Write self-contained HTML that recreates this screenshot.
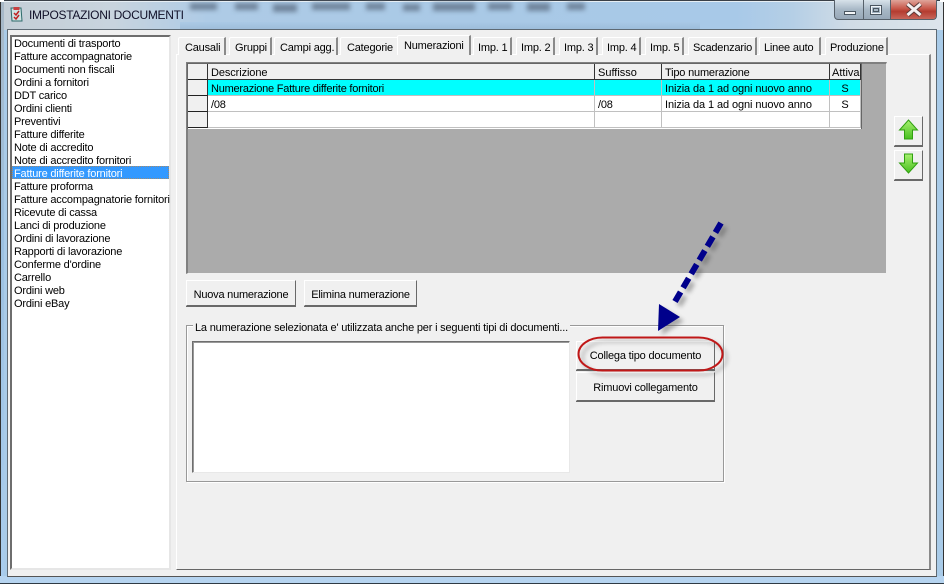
<!DOCTYPE html>
<html><head><meta charset="utf-8"><style>
html,body{margin:0;padding:0;background:#fff}
#w{position:relative;width:944px;height:584px;overflow:hidden;background:#a9cbe8;font:11px "Liberation Sans",sans-serif;color:#000;letter-spacing:-.19px}
#w div,#w span.t{position:absolute;box-sizing:border-box;white-space:nowrap}
.t{line-height:13px;height:13px}
.btn{background:#f0f0f0;border:1px solid;border-color:#fff #696969 #696969 #fff;box-shadow:0 1px 0 #696969;text-align:center;line-height:28px}
.tab{height:18px;top:37px;line-height:20px;border-right:2px solid #8a8a8a;border-top:1px solid #fff;border-left:1px solid #fff;background:#f0f0f0;border-top-left-radius:2px}
.l{left:14px;height:13px;line-height:13px;top:0}
.row{left:188px;width:673px;height:16px}
.c{top:0;height:16px;line-height:18px;padding-left:3px;border-right:1px solid #c0c0c0;border-bottom:1px solid #c0c0c0}
.h{background:#f0f0f0;border-right:1px solid #333;border-bottom:1px solid #333}
.ind{left:0;width:20px;background:#f0f0f0;border-right:1px solid #333;border-bottom:1px solid #222;height:16px;top:0}
</style></head><body><div id="w">
<div style="left:0;top:0;width:944px;height:30px;background:linear-gradient(90deg,#c4ced6 0,#c8d4de 12%,#aecbe6 22%,#a9c9e6 50%,#a8c9e8 78%,#b5cfe6 84%,#d0dce6 90%,#dde5ec 100%)"></div>
<div style="left:180px;top:22px;width:520px;height:7px;background:linear-gradient(#a9c9e6,#98b8d6);opacity:.7"></div>
<div style="left:0;top:0;width:944px;height:1px;background:#3a4048"></div>
<div style="left:0;top:1px;width:944px;height:1px;background:#e6eef4"></div>
<svg style="position:absolute;left:180px;top:0;filter:blur(2.5px)" width="440" height="26"><g fill="#70859c"><rect x="10" y="3" width="27" height="7"/><rect x="55" y="3" width="23" height="7"/><rect x="93" y="4" width="24" height="8"/><rect x="132" y="3" width="38" height="7"/><rect x="186" y="3" width="19" height="7"/><rect x="223" y="4" width="17" height="7"/><rect x="253" y="3" width="42" height="8"/><rect x="308" y="3" width="24" height="7"/><rect x="347" y="3" width="23" height="8"/><rect x="387" y="3" width="18" height="7"/></g></svg>
<div style="left:0;top:0;width:4px;height:584px;background:linear-gradient(#a8b8c6,#9cc0e0 40%,#a9cdee)"></div>
<div style="left:0;top:1px;width:1px;height:583px;background:#333"></div>
<div style="left:943px;top:1px;width:1px;height:583px;background:#333"></div>
<div style="left:0;top:583px;width:944px;height:1px;background:#2f3a44"></div>
<div style="left:0;top:576px;width:944px;height:7px;background:#b6d4f0"></div>
<div style="left:0;top:0;width:4px;height:2px;background:#fff"></div>
<div style="left:940px;top:0;width:4px;height:2px;background:#fff"></div>

<svg style="position:absolute;left:9px;top:6px" width="16" height="18" viewBox="0 0 16 18"><path d="M2 2h10l1 13H3z" fill="#cfe4e4" stroke="#2d6a6a"/><rect x="4.500" y="1" width="6" height="3" fill="#c84040"/><path d="M5 7l2 2 3-4M5 11l2 2 3-4" fill="none" stroke="#c02020" stroke-width="1.500"/></svg>
<span class="t" style="left:29px;top:8px;font-size:12px;letter-spacing:-.29px;line-height:15px;height:15px;color:#101028">IMPOSTAZIONI DOCUMENTI</span>

<div style="left:834px;top:0;width:103px;height:20px;border:1px solid #56606a;border-top:0;border-radius:0 0 4px 4px;overflow:hidden;background:linear-gradient(#d8e2ea,#a8b8c6 50%,#98a8b8)">
<div style="left:28px;top:0;width:1px;height:19px;background:#56606a"></div>
<div style="left:55px;top:0;width:1px;height:19px;background:#56606a"></div>
<div style="left:56px;top:0;width:46px;height:19px;background:linear-gradient(#dfa59a,#c8584a 45%,#b43c30 60%,#c8665a)"></div>
<div style="left:9px;top:11px;width:12px;height:4px;background:#f4f6f8;border:1px solid #4a5560"></div>
<div style="left:35px;top:5px;width:12px;height:10px;background:transparent;border:1px solid #4a5560;box-shadow:inset 0 0 0 1px #f0f4f8"></div>
<div style="left:38px;top:8px;width:6px;height:4px;border:1px solid #4a5560"></div>
<svg style="position:absolute;left:70px;top:2px" width="18" height="15"><path d="M2.500 2l13 11M15.500 2l-13 11" stroke="#5a3a38" stroke-width="5"/><path d="M2.500 2l13 11M15.500 2l-13 11" stroke="#f4f0f0" stroke-width="3"/></svg>
</div>

<!-- client -->
<div style="left:7px;top:29px;width:930px;height:548px;background:#f0f0f0;border:1px solid #5e6a74;border-bottom-color:#555"></div>

<!-- list -->
<div style="left:10px;top:35px;width:161px;height:535px;background:#fff;border:2px solid;border-color:#6e6e6e #e6e6e6 #e6e6e6 #6e6e6e;overflow:hidden"></div>
<div style="left:12px;top:166px;width:157px;height:13px;background:#3399ff;outline:1px dotted #a08a70;outline-offset:-1px"></div>
<div class="l" style="top:38px">Documenti di trasporto</div>
<div class="l" style="top:51px">Fatture accompagnatorie</div>
<div class="l" style="top:64px">Documenti non fiscali</div>
<div class="l" style="top:77px">Ordini a fornitori</div>
<div class="l" style="top:90px">DDT carico</div>
<div class="l" style="top:103px">Ordini clienti</div>
<div class="l" style="top:116px">Preventivi</div>
<div class="l" style="top:129px">Fatture differite</div>
<div class="l" style="top:142px">Note di accredito</div>
<div class="l" style="top:155px">Note di accredito fornitori</div>
<div class="l" style="top:168px;color:#fff">Fatture differite fornitori</div>
<div class="l" style="top:181px">Fatture proforma</div>
<div class="l" style="top:194px;width:156px;overflow:hidden">Fatture accompagnatorie fornitori</div>
<div class="l" style="top:207px">Ricevute di cassa</div>
<div class="l" style="top:220px">Lanci di produzione</div>
<div class="l" style="top:233px">Ordini di lavorazione</div>
<div class="l" style="top:246px">Rapporti di lavorazione</div>
<div class="l" style="top:259px">Conferme d'ordine</div>
<div class="l" style="top:272px">Carrello</div>
<div class="l" style="top:285px">Ordini web</div>
<div class="l" style="top:298px">Ordini eBay</div>

<!-- page -->
<div style="left:176px;top:54px;width:755px;height:516px;background:#f0f0f0;border:1px solid;border-color:#fff #8a8a8a #666 #fff;border-right-width:2px;border-bottom-width:1px"></div>
<div class="tab" style="left:178px;width:48px;padding-left:6px">Causali</div>
<div class="tab" style="left:229px;width:43px;padding-left:5px">Gruppi</div>
<div class="tab" style="left:274px;width:64px;padding-left:5px">Campi agg.</div>
<div class="tab" style="left:340px;width:57px;padding-left:6px;border-right:0">Categorie</div>
<div class="tab" style="left:397px;top:35px;width:74px;height:20px;line-height:21px;border-bottom:0;padding-left:6px">Numerazioni</div>
<div class="tab" style="left:473px;width:39px;padding-left:4px">Imp. 1</div>
<div class="tab" style="left:516px;width:39px;padding-left:4px">Imp. 2</div>
<div class="tab" style="left:559px;width:39px;padding-left:4px">Imp. 3</div>
<div class="tab" style="left:602px;width:39px;padding-left:4px">Imp. 4</div>
<div class="tab" style="left:645px;width:39px;padding-left:4px">Imp. 5</div>
<div class="tab" style="left:688px;width:69px;padding-left:4px">Scadenzario</div>
<div class="tab" style="left:759px;width:62px;padding-left:4px">Linee auto</div>
<div class="tab" style="left:825px;width:63px;padding-left:4px">Produzione</div>

<!-- grid -->
<div style="left:186px;top:62px;width:701px;height:212px;background:#ababab;border:1px solid;border-color:#808080 #f0f0f0 #f0f0f0 #808080;border-width:2px 1px 1px 2px"></div>
<div style="left:187px;top:63px;width:675px;height:66px;border:1px solid #666;border-bottom:0;background:#fff"></div>
<div class="row" style="top:64px">
<div class="ind"></div>
<div class="c h" style="left:20px;width:387px;letter-spacing:-.1px">Descrizione</div>
<div class="c h" style="left:407px;width:67px;letter-spacing:0">Suffisso</div>
<div class="c h" style="left:474px;width:168px">Tipo numerazione</div>
<div class="c h" style="left:642px;width:31px;padding-left:2px;letter-spacing:0">Attiva</div>
</div>
<div class="row" style="top:80px;background:#00ffff">
<div class="ind"></div>
<div class="c" style="left:20px;width:387px;letter-spacing:-.23px">Numerazione Fatture differite fornitori</div>
<div class="c" style="left:407px;width:67px"></div>
<div class="c" style="left:474px;width:168px;letter-spacing:-.1px">Inizia da 1 ad ogni nuovo anno</div>
<div class="c" style="left:642px;width:31px;text-align:center;padding:0">S</div>
</div>
<div class="row" style="top:96px;background:#fff">
<div class="ind"></div>
<div class="c" style="left:20px;width:387px">/08</div>
<div class="c" style="left:407px;width:67px">/08</div>
<div class="c" style="left:474px;width:168px;letter-spacing:-.1px">Inizia da 1 ad ogni nuovo anno</div>
<div class="c" style="left:642px;width:31px;text-align:center;padding:0">S</div>
</div>
<div class="row" style="top:112px;background:#fff">
<div class="ind"></div>
<div class="c" style="left:20px;width:387px"></div>
<div class="c" style="left:407px;width:67px"></div>
<div class="c" style="left:474px;width:168px"></div>
<div class="c" style="left:642px;width:31px"></div>
</div>

<!-- side buttons -->
<div class="btn" style="left:894px;top:116px;width:29px;height:30px"></div>
<div class="btn" style="left:894px;top:150px;width:29px;height:30px"></div>
<svg style="position:absolute;left:897px;top:119px" width="24" height="58"><defs><linearGradient id="g" x1="0" y1="0" x2="0" y2="1"><stop offset="0" stop-color="#a8f070"/><stop offset="1" stop-color="#48c020"/></linearGradient></defs>
<path d="M11.500 1L20.500 11H15.500V20H7.500V11H2.500Z" fill="url(#g)" stroke="#30a010"/>
<path d="M7.500 35H15.500V44H20.500L11.500 54L2.500 44H7.500Z" fill="url(#g)" stroke="#30a010"/></svg>

<!-- buttons -->
<div class="btn" style="left:186px;top:280px;width:110px;height:26px;letter-spacing:-.22px">Nuova numerazione</div>
<div class="btn" style="left:304px;top:280px;width:113px;height:26px;letter-spacing:-.22px">Elimina numerazione</div>

<!-- group -->
<div style="left:186px;top:325px;width:538px;height:157px;border:1px solid #999;box-shadow:1px 1px 0 #fff,inset 1px 1px 0 #fff"></div>
<div style="left:193px;top:322px;height:13px;line-height:13px;background:#f0f0f0;padding:0 2px">La numerazione selezionata e' utilizzata anche per i seguenti tipi di documenti...</div>
<div style="left:192px;top:341px;width:378px;height:132px;background:#fff;border:1px solid;border-color:#6e6e6e #e8e8e8 #e8e8e8 #6e6e6e;box-shadow:inset 1px 1px 0 #999"></div>
<div class="btn" style="left:576px;top:341px;width:139px;height:29px;line-height:29px">Collega tipo documento</div>
<div class="btn" style="left:576px;top:372px;width:139px;height:29px;line-height:30px">Rimuovi collegamento</div>

<!-- annotations -->
<svg style="position:absolute;left:0;top:0" width="944" height="584">
<defs><filter id="s" x="-20%" y="-20%" width="140%" height="140%"><feGaussianBlur stdDeviation="2"/></filter></defs>
<g filter="url(#s)" opacity=".45" transform="translate(4,4)">
<path d="M721 223L673 305" stroke="#555" stroke-width="6" stroke-dasharray="11 5" fill="none"/>
<path d="M659 304L680 317L658 331Z" fill="#555"/>
<rect x="578.500" y="337.500" width="144" height="33" rx="24" ry="16.500" fill="none" stroke="#555" stroke-width="2"/>
</g>
<path d="M721 223L673 305" stroke="#00008b" stroke-width="6" stroke-dasharray="11 5" fill="none"/>
<path d="M659 304L680 317L658 331Z" fill="#00008b"/>
<rect x="578.500" y="337.500" width="144" height="33" rx="24" ry="16.500" fill="none" stroke="#c01818" stroke-width="2"/>
</svg>
</div></body></html>
